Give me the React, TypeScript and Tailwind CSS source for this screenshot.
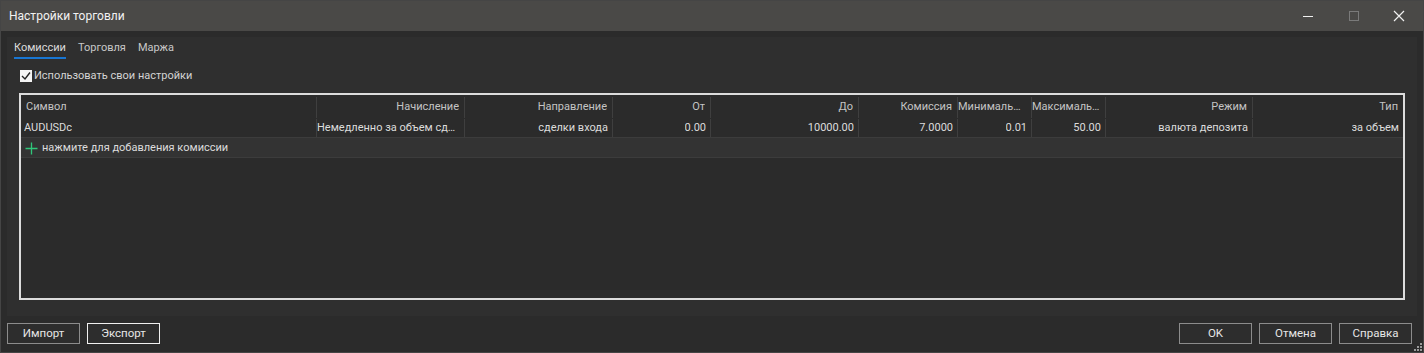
const font = { fontFamily: 'Roboto, "Noto Sans", sans-serif' };

interface Column {
  title: string;
  width: string;
  value: string;
}

const columns: Column[] = [
  { title: 'Символ', width: 'w-[295px]', value: 'AUDUSDc' },
  { title: 'Начисление', width: 'w-[148px]', value: 'Немедленно за объем сделки' },
  { title: 'Направление', width: 'w-[148px]', value: 'сделки входа' },
  { title: 'От', width: 'w-[98px]', value: '0.00' },
  { title: 'До', width: 'w-[148px]', value: '10000.00' },
  { title: 'Комиссия', width: 'w-[99px]', value: '7.0000' },
  { title: 'Минимальная', width: 'w-[74px]', value: '0.01' },
  { title: 'Максимальная', width: 'w-[74px]', value: '50.00' },
  { title: 'Режим', width: 'w-[147px]', value: 'валюта депозита' },
  { title: 'Тип', width: 'flex-1', value: 'за объем' },
];

function DialogButton({ label, focused }: { label: string; focused?: boolean }) {
  return (
    <button
      type="button"
      className={`flex h-[21px] w-[73px] items-center justify-center border bg-[#2d2d2d] text-[11.5px] text-[#e6e6e6] ${
        focused ? 'border-[#f0f0f0]' : 'border-[#8c8c8c]'
      }`}
    >
      {label}
    </button>
  );
}

export default function App() {
  return (
    <div className="flex h-[353px] w-[1424px] flex-col overflow-hidden border border-[#454545] bg-[#2b2b2b]" style={font}>
      {/* title bar */}
      <div className="flex h-[30px] shrink-0 items-center justify-between bg-[#4a4947] pl-[8px]">
        <span className="text-[12px] text-[#f2f2f2]">Настройки торговли</span>
        <div className="flex h-full items-center">
          <div className="flex h-full w-[46px] items-center justify-center">
            <div className="h-[1px] w-[10px] bg-[#f0f0f0]" />
          </div>
          <div className="flex h-full w-[46px] items-center justify-center">
            <div className="h-[10px] w-[10px] border border-[#7a7a7a]" />
          </div>
          <div className="flex h-full w-[46px] items-center justify-center pr-[2px]">
            <svg width="12" height="12" viewBox="0 0 12 12">
              <path d="M1 1 L11 11 M11 1 L1 11" stroke="#f0f0f0" strokeWidth="1.2" />
            </svg>
          </div>
        </div>
      </div>

      {/* tab page */}
      <div className="mx-[6px] mt-[6px] flex h-[279px] flex-col bg-[#2f2f2f] px-[12px]">
        <div className="-ml-[5px] flex h-[22px] items-end gap-[12px] text-[11px]">
          <div className="flex flex-col items-stretch">
            <span className="leading-[15px] text-[#dcdcdc]">Комиссии</span>
            <div className="mt-[2px] h-[2px] bg-[#1976d2]" />
          </div>
          <span className="pb-[4px] leading-[15px] text-[#c8c8c8]">Торговля</span>
          <span className="pb-[4px] leading-[15px] text-[#c8c8c8]">Маржа</span>
        </div>

        <label className="mt-[10px] flex items-center gap-[2px] pl-[1px] text-[11px] leading-[14px] text-[#d4d4d4]">
          <span className="flex h-[12px] w-[12px] items-center justify-center bg-[#f4f4f4]">
            <svg width="10" height="10" viewBox="0 0 10 10">
              <path d="M1 5 L4 8 L9 1.5" fill="none" stroke="#222" strokeWidth="1.4" />
            </svg>
          </span>
          Использовать свои настройки
        </label>

        {/* table */}
        <div className="mt-[10px] flex h-[207px] flex-col border-2 border-[#dcdcdc] bg-[#2b2b2b] text-[11px]">
          <div className="flex h-[23px] pt-[2px] text-[#c4c4c4]">
            {columns.map((c, i) => (
              <div
                key={c.title}
                className={`${c.width} ${i > 0 ? 'border-l border-[#3f3f3f]' : ''} flex min-w-0 items-center ${
                  i === 0 ? 'justify-start pl-[5px]' : 'justify-end pr-[5px]'
                }`}
              >
                <span className="truncate">{c.title}</span>
              </div>
            ))}
          </div>
          <div className="flex h-[20px] border-b border-[#3c3c3c] pt-[1px] text-[#dcdcdc]">
            {columns.map((c, i) => (
              <div
                key={c.title}
                className={`${c.width} ${i > 0 ? 'border-l border-[#3f3f3f]' : ''} flex min-w-0 items-center ${
                  i === 0 ? 'justify-start pl-[3px]' : 'justify-end pr-[4px]'
                }`}
              >
                <span className="truncate">{c.value}</span>
              </div>
            ))}
          </div>
          <div className="flex h-[20px] items-center gap-[4px] border-b border-[#3c3c3c] bg-[#333333] pl-[4px] pt-[1px] text-[#dcdcdc]">
            <svg width="13" height="13" viewBox="0 0 13 13">
              <path d="M6.5 0.5 V12.5 M0.5 6.5 H12.5" stroke="#2fc77a" strokeWidth="1.3" />
            </svg>
            нажмите для добавления комиссии
          </div>
        </div>
      </div>

      {/* footer */}
      <div className="relative mt-[7px] flex flex-1 items-start justify-between px-[6px]">
        <div className="flex gap-[7px]">
          <DialogButton label="Импорт" />
          <DialogButton label="Экспорт" focused />
        </div>
        <div className="flex gap-[7px] pr-[5px]">
          <DialogButton label="OK" />
          <DialogButton label="Отмена" />
          <DialogButton label="Справка" />
        </div>
        {/* size grip */}
        <svg className="absolute right-[1px] bottom-[1px]" width="9" height="9" viewBox="0 0 9 9">
          <g fill="#9a9a9a">
            <rect x="7" y="1" width="2" height="2" />
            <rect x="4" y="4" width="2" height="2" />
            <rect x="7" y="4" width="2" height="2" />
            <rect x="1" y="7" width="2" height="2" />
            <rect x="4" y="7" width="2" height="2" />
            <rect x="7" y="7" width="2" height="2" />
          </g>
        </svg>
      </div>
    </div>
  );
}
